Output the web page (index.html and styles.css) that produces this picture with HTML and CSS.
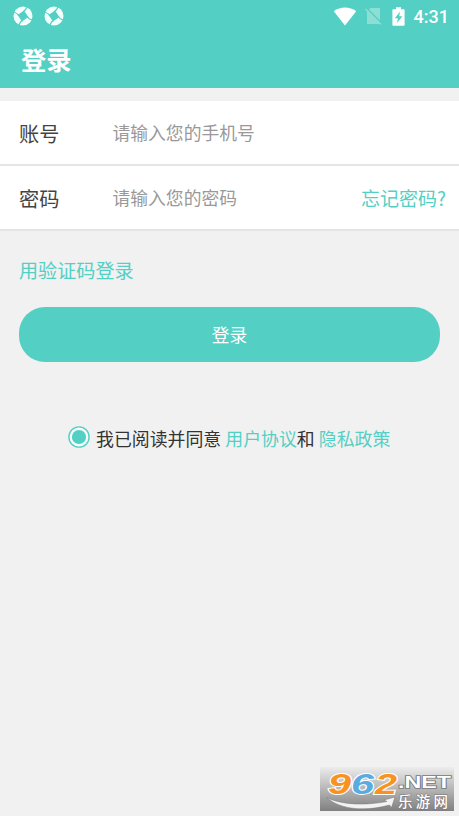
FILE: index.html
```html
<!DOCTYPE html>
<html lang="zh-CN">
<head>
<meta charset="utf-8">
<title>登录</title>
<link rel="stylesheet" href="styles.css">
</head>
<body>
<svg class="defs" width="0" height="0" aria-hidden="true">
  <defs>
    <symbol id="swirl" viewBox="0 0 20 20">
      <circle cx="10" cy="10" r="9.5" fill="currentColor"/>
      <path d="M11 4.6L15.4 11L9 15.4L4.6 9Z" fill="#54cfc4"/>
      <g fill="none" stroke="#54cfc4" stroke-width="1.2">
        <path id="slit" d="M10.4 5.6Q12.8 4.6 14 .8"/>
        <use href="#slit" transform="rotate(90 10 10)"/>
        <use href="#slit" transform="rotate(180 10 10)"/>
        <use href="#slit" transform="rotate(270 10 10)"/>
      </g>
    </symbol>
  </defs>
</svg>
<header class="header">
  <div class="status">
    <svg class="swirl" width="20" height="20"><use href="#swirl"/></svg>
    <svg class="swirl" width="20" height="20"><use href="#swirl"/></svg>
    <svg class="wifi" width="24" height="19" viewBox="0 0 24 19"><path d="M.8 4.2C7.2-.8 16.8-.8 23.2 4.2L12 18.5Z" fill="#fff"/></svg>
    <svg class="sim" width="17" height="18" viewBox="0 0 17 18"><path d="M5.5 1H15V17H2V4.5Z" fill="#8cdfd5"/><path d="M1.5 1L17 16.5" stroke="#54cfc4" stroke-width="1.4"/><path d="M.5 2L16 17.5" stroke="#8cdfd5" stroke-width="1.4"/></svg>
    <svg class="battery" width="13" height="19" viewBox="0 0 13 19"><path d="M1.2 2.2H4V.3H9V2.2H11.8Q12.6 2.2 12.6 3V17.8Q12.6 18.7 11.8 18.7H1.2Q.4 18.7.4 17.8V3Q.4 2.2 1.2 2.2Z" fill="#fff"/><path d="M8 4.6L2.8 11.2H5.9L5 16L10.4 9.2H7.2Z" fill="#54cfc4"/></svg>
    <span class="clock">4:31</span>
  </div>
  <h1 class="title">登录</h1>
</header>
<main>
  <div class="fields">
    <label class="row"><span class="name">账号</span><span class="hint">请输入您的手机号</span></label>
    <label class="row"><span class="name">密码</span><span class="hint">请输入您的密码</span><a class="forgot">忘记密码?</a></label>
  </div>
  <a class="code-login">用验证码登录</a>
  <button class="submit">登录</button>
  <div class="agree">
    <svg class="radio" width="22" height="22" viewBox="0 0 22 22"><circle cx="11" cy="11" r="10.1" fill="#f6fbfb" stroke="#54cfc4" stroke-width="1.4"/><circle cx="11" cy="11" r="7.1" fill="#54cfc4"/></svg>
    <span>我已阅读并同意 <a>用户协议</a>和 <a>隐私政策</a></span>
  </div>
</main>
<svg class="watermark" width="134" height="44" viewBox="0 0 134 44">
  <defs>
    <linearGradient id="plate" x1="0" y1="0" x2="0" y2="1"><stop offset="0" stop-color="#ececec"/><stop offset="1" stop-color="#808080"/></linearGradient>
  </defs>
  <rect width="134" height="44" fill="url(#plate)"/>
  <path d="M6.5 30.5C24 39 48 38 67 34.5L64 33L75 30L71.5 40.5L69.5 38C48 44 22 44 6.5 30.5Z" fill="#f2f2f2" stroke="#777" stroke-width=".5"/>
  <g class="digits">
    <text x="8" y="27.2" textLength="23" lengthAdjust="spacingAndGlyphs" fill="#f7931e">9</text>
    <text x="31" y="27.2" textLength="23" lengthAdjust="spacingAndGlyphs" fill="#5aabdf">6</text>
    <text x="55" y="27.2" textLength="22" lengthAdjust="spacingAndGlyphs" fill="#f7931e">2</text>
  </g>
  <text class="net" x="78" y="21" textLength="53" lengthAdjust="spacingAndGlyphs">.NET</text>
  <text class="site" x="78" y="39.5" textLength="50">乐游网</text>
</svg>
</body>
</html>
```
FILE: styles.css
```css
* { box-sizing: border-box; }
body {
  margin: 0;
  height: 816px;
  overflow: hidden;
  background: #f1f1f1;
  font-family: "Noto Sans CJK SC", sans-serif;
  color: #333;
}
.defs { position: absolute; }
.header { height: 88px; background: #54cfc4; color: #fff; }
.status { height: 32px; padding: 0 10px 0 13px; display: flex; align-items: center; }
.swirl { margin-right: 11px; color: #f1fffd; }
.wifi { margin-left: auto; margin-right: 8px; }
.sim { margin-right: 10px; }
.battery { margin-right: 9px; }
.clock { font: 500 18px/32px Roboto, sans-serif; padding-top: 2px; }
.title { margin: 0; padding-left: 21px; font-size: 25.3px; line-height: 55px; font-weight: 700; }
.fields { margin-top: 13px; }
.row {
  display: flex;
  align-items: center;
  height: 65px;
  padding: 0 13px 0 19px;
  background: #fff;
  border-bottom: 2px solid #e5e5e5;
}
.name { width: 93.5px; padding-top: 1px; font-size: 20.2px; color: #444; }
.hint { margin-top: -1px; font-size: 17.8px; color: #999; }
.forgot { margin-left: auto; font-size: 19px; color: #54cfc4; }
.code-login { display: block; margin: 25px 0 0 19px; font-size: 19.1px; line-height: 28px; color: #54cfc4; }
.submit {
  display: block;
  width: 421px;
  height: 55px;
  margin: 23px 0 0 19px;
  padding: 0;
  border: 0;
  border-radius: 26px;
  background: #54cfc4;
  color: #fff;
  font: 400 17.75px/55px "Noto Sans CJK SC", sans-serif;
}
.agree { display: flex; align-items: center; height: 30px; margin: 61px 0 0 68px; font-size: 17.9px; white-space: nowrap; }
.radio { margin: -2px 6px 0 0; }
.agree a { color: #54cfc4; }
.watermark { position: absolute; left: 320px; top: 767px; }
.digits { font: italic 700 30px "Liberation Sans", sans-serif; stroke: #fff; stroke-width: 2px; paint-order: stroke; }
.net { font: 700 16.5px "Liberation Sans", sans-serif; fill: #fff; stroke: #777; stroke-width: 1.5px; paint-order: stroke; }
.site { font: 500 14.5px/1 "Noto Sans CJK SC", sans-serif; fill: #fff; stroke: #777; stroke-width: 1px; paint-order: stroke; }
```
